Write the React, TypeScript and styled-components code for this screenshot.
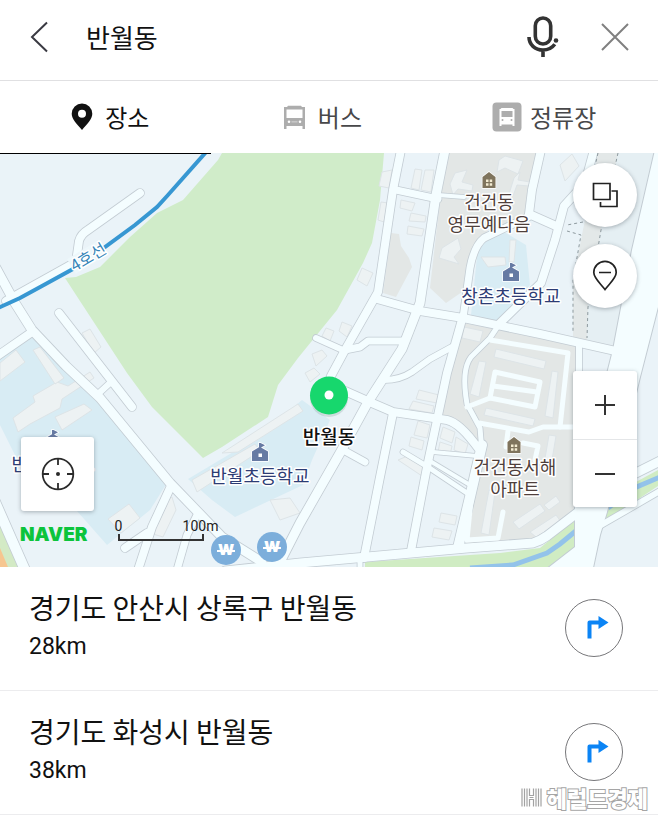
import React from "react";
import styled, { createGlobalStyle, css } from "styled-components";

const KR = '"Noto Sans CJK KR", sans-serif';
const LATIN = 'Roboto, "Noto Sans CJK KR", sans-serif';

const GlobalStyle = createGlobalStyle`
  * { box-sizing: border-box; }
  body { margin: 0; background: #fff; color: #111; font-family: ${KR}; }
  button, input { font: inherit; color: inherit; border: 0; padding: 0; background: none; }
  button { cursor: pointer; }
  svg { display: block; }
`;

const Screen = styled.main`
  position: relative;
  display: flex;
  flex-direction: column;
  min-height: 100vh;
  background: #fff;
  overflow: hidden;
`;

const SearchBar = styled.header`
  display: flex;
  align-items: center;
  height: 81px;
  padding: 0 28px 6px;
  border-bottom: 1px solid #e0e0e2;
`;

const IconButton = styled.button`
  flex: none;
  display: flex;
`;

const SearchInput = styled.input`
  flex: 1;
  min-width: 0;
  height: 48px;
  margin: 0 24px 0 36px;
  font-size: 26px;
  line-height: 48px;
  outline: none;
`;

const BarActions = styled.div`
  display: flex;
  align-items: center;
  gap: 40px;
`;

const Tabs = styled.nav`
  display: grid;
  grid-template-columns: 32fr 34fr 34fr;
  height: 72px;
`;

const Tab = styled.button<{ $active?: boolean; $gap: number }>`
  position: relative;
  display: flex;
  align-items: center;
  justify-content: center;
  gap: ${(p) => p.$gap}px;
  font-size: 24px;
  line-height: 36px;
  color: #48484a;
  &:last-child {
    padding-right: 4px;
  }
  ${(p) =>
    p.$active &&
    css`
      padding-left: 10px;
      color: #111;
      &::after {
        content: "";
        position: absolute;
        left: 0;
        right: 0;
        bottom: -1px;
        height: 1px;
        background: #000;
        z-index: 1;
      }
    `}
`;

const MapArea = styled.section`
  position: relative;
  width: 100%;
  aspect-ratio: 658 / 414;
  overflow: hidden;
  background: #eaf3f8;
`;

const MapCanvas = styled.svg`
  width: 100%;
  height: 100%;
`;

const MapText = styled.text<{ $tone: string; $size?: number; $weight?: number }>`
  font-family: ${KR};
  font-size: ${(p) => p.$size ?? 18}px;
  font-weight: ${(p) => p.$weight ?? 400};
  fill: ${(p) => p.$tone};
  stroke: #fff;
  stroke-width: 3px;
  stroke-linejoin: round;
  paint-order: stroke;
  text-anchor: middle;
`;

const WonText = styled.text`
  font-family: Inter, sans-serif;
  font-size: 15px;
  font-weight: 900;
  fill: #fff;
  text-anchor: middle;
`;

const ControlColumn = styled.div`
  position: absolute;
  top: 10px;
  right: 21px;
  bottom: 60px;
  display: flex;
  flex-direction: column;
  gap: 17px;
`;

const surface = css`
  background: #fff;
  box-shadow: 0 1px 4px rgba(60, 70, 80, 0.4);
`;

const RoundButton = styled.button`
  ${surface}
  width: 64px;
  height: 64px;
  border-radius: 50%;
`;

const ZoomGroup = styled.div`
  ${surface}
  display: flex;
  flex-direction: column;
  margin-top: auto;
  border-radius: 3px;
`;

const ZoomButton = styled.button`
  display: grid;
  place-items: center;
  width: 64px;
  height: 68px;
  & + & {
    border-top: 1px solid #e4e6e8;
  }
`;

const LocateButton = styled.button`
  ${surface}
  position: absolute;
  left: 21px;
  bottom: 56px;
  display: grid;
  place-items: center;
  width: 73px;
  height: 74px;
  border-radius: 3px;
`;

const MapFooter = styled.div`
  position: absolute;
  left: 20px;
  bottom: 20px;
  display: flex;
  align-items: flex-end;
  gap: 27px;
`;

const Brand = styled.span`
  font-family: Inter, sans-serif;
  font-size: 19px;
  font-weight: 900;
  line-height: 24px;
  color: #0cc43c;
`;

const Scale = styled.div`
  display: flex;
  flex-direction: column;
  width: 104px;
  padding-bottom: 6px;
  font-family: ${LATIN};
  font-size: 14px;
  line-height: 16px;
  color: #222;
`;

const ScaleLabels = styled.div`
  display: flex;
  justify-content: space-between;
`;

const ScaleLine = styled.div`
  width: 86px;
  height: 7px;
  margin-left: 3px;
  border: 2px solid #333;
  border-top: 0;
`;

const Results = styled.ul`
  margin: 0;
  padding: 0;
  list-style: none;
`;

const ResultRow = styled.li`
  display: flex;
  align-items: center;
  justify-content: space-between;
  padding: 21px 35px 22px 29px;
  border-bottom: 1px solid #ececee;
`;

const ResultTitle = styled.h2`
  margin: 0;
  font-size: 28px;
  font-weight: 400;
  line-height: 38px;
`;

const ResultDistance = styled.p`
  margin: 0;
  font-family: ${LATIN};
  font-size: 23px;
  line-height: 42px;
`;

const RouteButton = styled.button`
  flex: none;
  width: 58px;
  height: 58px;
  border: 1px solid #77777a;
  border-radius: 50%;
`;

const Watermark = styled.div`
  position: absolute;
  right: 10px;
  bottom: 11px;
  display: flex;
  align-items: center;
  gap: 5px;
  font-size: 22px;
  font-weight: 900;
  line-height: 32px;
  color: #fff;
  -webkit-text-stroke: 2px #a5a5a5;
  paint-order: stroke fill;
`;

type Road = [string, number];

const roads: Road[] = [
  ["M-4 268L15 303L32 330L66 366L100 398L170 483L222 537L262 562", 9],
  ["M-4 357L32 332", 8],
  ["M6 301L76 262L79 241Q81 234 88 230L140 193", 8],
  ["M59 313L132 407", 8],
  ["M98 394L111 382", 6],
  ["M171 486L152 527L138 570", 8],
  ["M125 548L147 533", 8],
  ["M197 515L187 535L177 570", 7],
  ["M-8 495L25 570", 10],
  ["M401 150L393 190L378 292L345 350L331 376", 8],
  ["M316 338L345 351", 6],
  ["M396 190L438 199", 7],
  ["M445 150L436 195L420 303L402 349L368 402L340 453L300 523L280 562", 9],
  ["M377 299L420 311L463 318L540 334L620 352", 8],
  ["M345 350L360 347L368 341L405 341", 7],
  ["M384 380Q400 380 412 372L430 359L452 347", 6],
  ["M541 150L532 190L529 214L556 226", 8],
  ["M438 195L464 197", 4],
  ["M463 318L470 268Q474 246 484 238L530 216", 7],
  ["M463 316L447 373L437 420L427 467L411 551", 8],
  ["M594 150L585 183L564 206L555 240L541 283L498 325", 8],
  ["M345 391L372 403L393 412L447 420Q460 423 478 448", 8],
  ["M482 445L470 497L458 548", 10],
  ["M393 413L380 477L364 558", 8],
  ["M345 451L365 462", 7],
  ["M433 452L477 456", 4],
  ["M430 461L470 485", 4],
  ["M403 452L428 467L467 493", 5],
  ["M225 571L300 563L367 557L467 548L533 543Q540 541 547 536L577 513L612 485L660 461", 9],
  ["M579 343V380", 6],
  ["M596 528L660 491", 6],
  ["M498 326L490 338L471 357Q461 370 467 404L480 428L482 452", 5],
  ["M360 567V557", 5],
];

const lanes: string[] = [
  "M490 340L568 353L560 427",
  "M479 423L529 432L543 427H576",
  "M495 372L540 382L535 407L490 398Z",
  "M493 386L537 392",
  "M467 407L490 398",
  "M508 431L506 447M523 443L538 446L535 460",
  "M503 512L498 538L467 540L471 500",
];

const buildings: string[] = [
  "M13 418L35 402L33 396L57 382L68 386L90 372L94 378L62 399L60 408L30 424L18 432Z",
  "M33 350L40 347L64 378L55 384Z",
  "M0 363L16 350L25 362L0 381Z",
  "M55 417L84 404L92 410L62 430Z",
  "M82 333L90 329L101 347L94 353Z",
  "M108 519L129 504L140 518L121 533Z",
  "M222 453L298 404L303 411L238 452Z",
  "M192 480L255 444L260 451L197 492Z",
  "M270 500L290 498L300 513L280 520Z",
  "M160 502L172 497L176 510L163 537L153 534Z",
  "M382 172L392 170L389 188L379 186Z",
  "M415 169L422 170L419 190L411 188ZM425 170L434 170L431 192L421 190Z",
  "M401 200L415 203L412 211L400 208Z",
  "M411 213L426 216L425 222L409 221ZM408 226L424 229L422 236L407 234Z",
  "M381 202L388 203L384 222L378 220Z",
  "M362 268L373 273L367 286L357 280Z",
  "M326 328L334 331L330 341L322 336Z",
  "M342 322L352 326L347 337L339 331Z",
  "M312 354L322 350L327 356L316 366ZM305 373L314 368L320 374L310 382Z",
  "M419 390L439 395L437 403L416 399ZM413 401L434 406L432 413L409 409Z",
  "M418 421L430 425L427 438L414 435ZM411 437L424 441L422 450L409 446Z",
  "M443 427L455 432L452 443L440 438ZM440 442L452 446L450 455L438 452ZM456 437L468 444L465 454L454 450Z",
  "M398 460L410 455L426 470L422 476Z",
  "M441 513L457 516L455 525L439 522ZM434 528L452 531L449 540L432 537Z",
  "M464 327L483 331L480 342L462 338Z",
  "M496 349L546 361L544 369L494 357Z",
  "M479 361L486 362L479 397L470 394Z",
  "M552 371L558 372L553 418L545 416Z",
  "M486 408L535 419L533 426L484 415Z",
  "M549 435L556 436L551 466L544 464Z",
  "M489 490L495 492L489 535L481 533Z",
  "M513 522L540 504L545 511L519 529ZM530 532L556 515L561 522L536 537ZM544 505L556 496L560 502L549 510Z",
  "M455 173L467 170L462 182L473 185L472 191L458 189L453 195L450 184Z",
  "M505 156L523 161L518 174L505 168L497 172L499 160Z",
  "M514 178L520 172L518 180L530 182L529 186L517 185L513 196L509 194Z",
  "M442 248L458 238L461 249L454 257L459 264L439 258Z",
  "M510 240L516 240L514 262L509 262Z",
  "M481 257L505 257L506 265L488 267Z",
  "M560 165L572 154L579 166L565 181Z",
];

const SchoolIcon = ({ x, y }: { x: number; y: number }) => (
  <g transform={`translate(${x} ${y})`} fill="#667aa3" stroke="#fff" strokeWidth="1.4" paintOrder="stroke">
    <path d="M-8 18V8.500L-1 4.200V0H0.500L5 2.200L1 4.400L8 8.500V18Z" />
    <rect x="-1.500" y="10.500" width="3.500" height="3.500" fill="#fff" stroke="none" />
  </g>
);

const ApartmentIcon = ({ x, y }: { x: number; y: number }) => (
  <g transform={`translate(${x} ${y})`}>
    <path d="M-6.500 16V5L0 0L6.500 5V16Z" fill="#7f745d" stroke="#fff" strokeWidth="1.400" paintOrder="stroke" />
    <path d="M-3 7.500H-0.500V10H-3ZM0.700 7.500H3.200V10H0.700ZM-3 11.200H-0.500V13.700H-3ZM0.700 11.200H3.200V13.700H0.700Z" fill="#f4ecd2" />
  </g>
);

const WonIcon = ({ x, y }: { x: number; y: number }) => (
  <g transform={`translate(${x} ${y})`}>
    <circle r="15" fill="#7caedb" />
    <WonText y="5">W</WonText>
    <path d="M-9 1H9" stroke="#fff" strokeWidth="2" />
  </g>
);

const CityMap = () => (
  <MapCanvas viewBox="0 153 658 414" preserveAspectRatio="xMidYMid slice" role="img" aria-label="반월동 지도">
    <rect x="0" y="153" width="658" height="414" fill="#eaf3f8" />
    <path d="M222 153L218 160L183 200L157 213L130 237L100 267L76 277L65 278L78 298L127 373L152 407L203 458L222 447L268 417L278 385L298 358L337 310L363 263L372 243L380 200L384 153Z" fill="#d0ecc9" />
    <path d="M0 358L32 335L100 400L167 483L150 510L107 545L77 511L20 465L0 425ZM188 479L255 439L302 400L330 420L312 460L303 485L235 517L212 500ZM478 247L501 230L526 245L530 285L498 322L471 315Z" fill="#d8ecf4" />
    <path d="M448 153H537L529 216L488 230L476 245L462 292L446 303L430 288L440 200ZM463 323L579 345L575 512L535 541L466 546L482 452L440 412L450 360ZM391 233L399 234L401 246L409 258L412 267L396 297L383 293Z" fill="#e3e7e6" />
    <path d="M598 153H654L632 250L613 350L573 337V285L592 220Z" fill="#e5eff3" />
    <path d="M598 153H618L601 230L588 307L587 340L573 337V280L581 240Z" fill="#e3e8e8" />
    <path d="M0 522L18 567H0Z" fill="#d3eac5" />
    <path d="M0 548L8 567H0Z" fill="#f6c690" />
    <path d="M365 567V562L500 553L540 548L577 518V548L548 567ZM604 522L612 495L658 470V486Z" fill="#d0ecc3" />
    <path d="M470 568L513 565L547 553L560 544L577 530M608 508L632 489L660 477" fill="none" stroke="#93c3ea" strokeWidth="5" />
    <g fill="#edf2f3" stroke="#dde4e7" strokeWidth="1">
      {buildings.map((d) => (
        <path key={d} d={d} />
      ))}
    </g>
    <g fill="none" stroke="#c3ccd3" strokeLinecap="round" strokeLinejoin="round">
      {roads.map(([d, w]) => (
        <path key={d} d={d} strokeWidth={w + 1.6} />
      ))}
      <path d="M655 150L632 250L613 350L575 500V547L548 568H593L600 535L607 512L640 377L658 307V150Z" strokeWidth="2" />
    </g>
    <path d="M655 150L632 250L613 350L575 500V547L548 568H593L600 535L607 512L640 377L658 307V150Z" fill="#f4fdff" />
    <g fill="none" stroke="#f4fdff" strokeLinecap="round" strokeLinejoin="round">
      {roads.map(([d, w]) => (
        <path key={d} d={d} strokeWidth={w} />
      ))}
      {lanes.map((d) => (
        <path key={d} d={d} strokeWidth="5" />
      ))}
    </g>
    <path d="M598 153L592 180M583 222L567 225M567 231L581 235L573 280V333M618 153L601 230L588 307L587 338" fill="none" stroke="#8d999e" strokeWidth="1" strokeDasharray="3 3" />
    <path d="M-4 309L20 298L42 286L82 264L135 225L157 207L168 195L207 151" fill="none" stroke="#3797d2" strokeWidth="4" />
    <g transform="rotate(-31 88 257)">
      <rect x="69" y="248" width="37" height="17" fill="#edf7fb" />
      <MapText x="88" y="263" $tone="#3585b8" $size={16}>4호선</MapText>
    </g>

    <SchoolIcon x={511} y={263} />
    <SchoolIcon x={260} y={443} />
    <SchoolIcon x={53} y={430} />
    <ApartmentIcon x={489} y={172} />
    <ApartmentIcon x={514} y={437} />
    <MapText $tone="#4f3f3c">
      <tspan x="489" y="209">건건동</tspan>
      <tspan x="489" y="231">영무예다음</tspan>
    </MapText>
    <MapText x="511" y="303" $tone="#2d3c74">창촌초등학교</MapText>
    <MapText x="260" y="483" $tone="#2d3c74">반월초등학교</MapText>
    <MapText x="53" y="471" $tone="#2d3c74">반월중학교</MapText>
    <MapText $tone="#4f3f3c">
      <tspan x="515" y="474">건건동서해</tspan>
      <tspan x="515" y="496">아파트</tspan>
    </MapText>

    <WonIcon x={226} y={550} />
    <WonIcon x={272} y={547} />

    <circle cx="329" cy="398" r="19" fill="#52746a" opacity="0.18" />
    <circle cx="329" cy="395.500" r="19" fill="#17d76d" />
    <circle cx="329" cy="395" r="4.500" fill="#fff" />
    <MapText x="329" y="444" $tone="#111" $size={19} $weight={500}>반월동</MapText>
  </MapCanvas>
);

const BackIcon = () => (
  <svg width="22" height="32" viewBox="0 0 22 32" fill="none" stroke="#3a3a42" strokeWidth="2">
    <path d="M19 1.500L4 16L19 30.500" />
  </svg>
);

const MicIcon = () => (
  <svg width="34" height="42" viewBox="0 0 34 42" fill="none" stroke="#333" strokeWidth="3.600">
    <rect x="9.300" y="2" width="15.400" height="26" rx="7.700" />
    <path d="M3 21C3 28.500 9 34 17 34C22 34 26 32 28.800 28.200M17 34V41" />
    <circle cx="30" cy="24.500" r="2.300" fill="#333" stroke="none" />
  </svg>
);

const CloseIcon = () => (
  <svg width="30" height="30" viewBox="0 0 30 30" fill="none" stroke="#808080" strokeWidth="2">
    <path d="M2 2L28 28M28 2L2 28" />
  </svg>
);

const PinIcon = () => (
  <svg width="22" height="28" viewBox="0 0 22 28">
    <path fillRule="evenodd" fill="#111" d="M11 0.500A10.300 10.300 0 0 1 21.300 10.800C21.300 16.500 16 21 11 27C6 21 0.700 16.500 0.700 10.800A10.300 10.300 0 0 1 11 0.500ZM11 6.800A4 4 0 1 0 11 14.800A4 4 0 0 0 11 6.800Z" />
  </svg>
);

const BusIcon = () => (
  <svg width="23" height="25" viewBox="0 0 23 25">
    <path fillRule="evenodd" fill="#adadad" d="M5 0.800H18L19 2H22V24H19.500V21H3.500V24H1V2H4ZM3.500 4.500V13H19.500V4.500ZM6 15.500A1.300 1.300 0 1 0 6 18.100A1.300 1.300 0 0 0 6 15.500ZM17 15.500A1.300 1.300 0 1 0 17 18.100A1.300 1.300 0 0 0 17 15.500Z" />
    <path d="M8.500 16.800H14.500" stroke="#c9c9c9" strokeWidth="1.500" />
  </svg>
);

const StationIcon = () => (
  <svg width="30" height="30" viewBox="0 0 30 30">
    <rect x="0.500" y="0.500" width="29" height="29" rx="4" fill="#adadad" />
    <path fillRule="evenodd" fill="#fff" d="M9.500 6H20.500L21.500 7H22.500V24H20.500V22.500H9.500V24H7.500V7H8.500ZM9.500 9V15H20.500V9ZM10.500 17A1 1 0 1 0 10.500 19A1 1 0 0 0 10.500 17ZM19.500 17A1 1 0 1 0 19.500 19A1 1 0 0 0 19.500 17Z" />
  </svg>
);

const LayersIcon = () => (
  <svg width="64" height="64" viewBox="0 0 64 64" fill="none" stroke="#222" strokeWidth="1.700">
    <path d="M20.500 20.500H37V36.500H20.500ZM38.500 28H44V43.500H27.500V39" />
  </svg>
);

const PlaceIcon = () => (
  <svg width="64" height="64" viewBox="0 0 64 64" fill="none" stroke="#222" strokeWidth="1.700">
    <path d="M32 45.500C27 39 20.800 34 20.800 28.500A11.200 11.200 0 0 1 43.200 28.500C43.200 34 37 39 32 45.500ZM26 28.500H38" />
  </svg>
);

const SignIcon = ({ plus }: { plus?: boolean }) => (
  <svg width="20" height="20" viewBox="0 0 20 20" stroke="#333" strokeWidth="2">
    <path d={plus ? "M0 10H20M10 0V20" : "M0 10H20"} />
  </svg>
);

const TargetIcon = () => (
  <svg width="34" height="34" viewBox="0 0 34 34" fill="none" stroke="#2b2b2b" strokeWidth="1.800">
    <circle cx="17" cy="17" r="15.300" />
    <path d="M17 2V8M17 26V32M2 17H8M26 17H32" />
    <circle cx="17" cy="17" r="2" fill="#2b2b2b" stroke="none" />
  </svg>
);

const RouteIcon = () => (
  <svg width="56" height="56" viewBox="0 0 56 56">
    <path d="M23.500 38.500V22.500H34" fill="none" stroke="#0b84f5" strokeWidth="4" strokeLinejoin="round" />
    <path d="M32.500 16L42.500 22.500L32.500 29Z" fill="#0b84f5" />
  </svg>
);

const HeraldMark = () => (
  <svg width="21" height="19" viewBox="0 0 21 19" fill="none" stroke="#a2a2a2" strokeWidth="1.200">
    <path d="M1 0.500V18.500M3.500 0.500V18.500M6 0.500V18.500M8.500 0.500V7.500H12.500V0.500M8.500 18.500V11.500H12.500V18.500M8.500 9.500H12.500M15 0.500V18.500M17.500 0.500V18.500M20 0.500V18.500" />
  </svg>
);

const results = [
  { title: "경기도 안산시 상록구 반월동", distance: "28km" },
  { title: "경기도 화성시 반월동", distance: "38km" },
];

export default function App() {
  return (
    <Screen>
      <GlobalStyle />
      <SearchBar>
        <IconButton aria-label="뒤로">
          <BackIcon />
        </IconButton>
        <SearchInput type="text" aria-label="검색" defaultValue="반월동" />
        <BarActions>
          <IconButton aria-label="음성 검색">
            <MicIcon />
          </IconButton>
          <IconButton aria-label="지우기">
            <CloseIcon />
          </IconButton>
        </BarActions>
      </SearchBar>

      <Tabs aria-label="검색 유형">
        <Tab $active $gap={12} aria-current="page">
          <PinIcon />
          장소
        </Tab>
        <Tab $gap={12}>
          <BusIcon />
          버스
        </Tab>
        <Tab $gap={8}>
          <StationIcon />
          정류장
        </Tab>
      </Tabs>

      <MapArea>
        <CityMap />
        <ControlColumn>
          <RoundButton aria-label="지도 종류">
            <LayersIcon />
          </RoundButton>
          <RoundButton aria-label="장소 표시">
            <PlaceIcon />
          </RoundButton>
          <ZoomGroup>
            <ZoomButton aria-label="확대">
              <SignIcon plus />
            </ZoomButton>
            <ZoomButton aria-label="축소">
              <SignIcon />
            </ZoomButton>
          </ZoomGroup>
        </ControlColumn>
        <LocateButton aria-label="현재 위치">
          <TargetIcon />
        </LocateButton>
        <MapFooter>
          <Brand>NAVER</Brand>
          <Scale>
            <ScaleLabels>
              <span>0</span>
              <span>100m</span>
            </ScaleLabels>
            <ScaleLine />
          </Scale>
        </MapFooter>
      </MapArea>

      <Results>
        {results.map((r) => (
          <ResultRow key={r.title}>
            <div>
              <ResultTitle>{r.title}</ResultTitle>
              <ResultDistance>{r.distance}</ResultDistance>
            </div>
            <RouteButton aria-label={`${r.title} 길찾기`}>
              <RouteIcon />
            </RouteButton>
          </ResultRow>
        ))}
      </Results>

      <Watermark>
        <HeraldMark />
        헤럴드경제
      </Watermark>
    </Screen>
  );
}
